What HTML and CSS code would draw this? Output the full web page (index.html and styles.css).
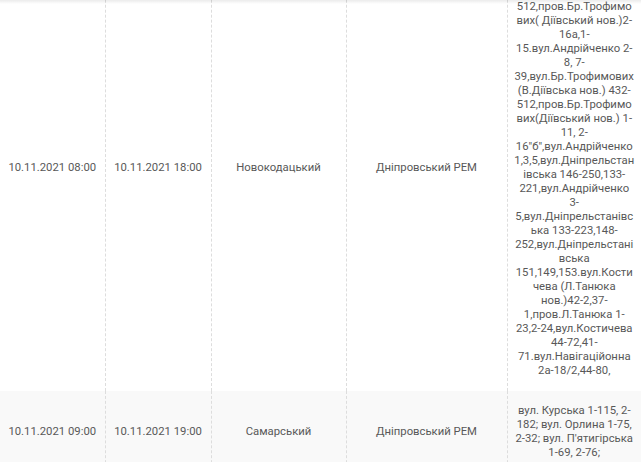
FILE: index.html
```html
<!DOCTYPE html>
<html lang="uk">
<head>
  <meta charset="UTF-8" />
  <meta name="viewport" content="width=device-width, initial-scale=1.0"/>
  <title>Графік відключень</title>
  <link rel="stylesheet" href="styles.css">
</head>
<body>

<div class="viewport">
  <table class="schedule">
    <colgroup>
      <col class="c-start">
      <col class="c-end">
      <col class="c-area">
      <col class="c-rem">
      <col class="c-addr">
    </colgroup>
    <tbody>
      <tr>
        <td>10.11.2021 08:00</td>
        <td>10.11.2021 18:00</td>
        <td>Новокодацький</td>
        <td>Дніпровський РЕМ</td>
        <td>вул.Андрійченко 1-7,вул.Бр.Трофимових (В.Діївська нов.) 432-512,пров.Бр.Трофимових( Діївський нов.)2-16а,1-15.вул.Андрійченко 2-8, 7-39,вул.Бр.Трофимових (В.Діївська нов.) 432-512,пров.Бр.Трофимових(Діївський нов.) 1-11, 2-16"б",вул.Андрійченко 1,3,5,вул.Дніпрельстанівська 146-250,133-221,вул.Андрійченко 3-5,вул.Дніпрельстанівська 133-223,148-252,вул.Дніпрельстанівська 151,149,153.вул.Костичева (Л.Танюка нов.)42-2,37-1,пров.Л.Танюка 1-23,2-24,вул.Костичева 44-72,41-71.вул.Навігаційонна 2а-18/2,44-80,</td>
      </tr>
      <tr class="alt">
        <td>10.11.2021 09:00</td>
        <td>10.11.2021 19:00</td>
        <td>Самарський</td>
        <td>Дніпровський РЕМ</td>
        <td>вул. Курська 1-115, 2-182; вул. Орлина 1-75, 2-32; вул. П'ятигірська 1-69, 2-76;</td>
      </tr>
    </tbody>
  </table>
</div>

</body>
</html>
```

FILE: styles.css
```css
* { box-sizing: border-box; margin: 0; padding: 0; }

body {
  font-family: Roboto, 'Liberation Sans', sans-serif;
  font-size: 11.3px;
  color: #585858;
  background: #fff;
}

.viewport {
  position: relative;
  height: 462px;
  overflow: hidden;
}

.viewport::before {
  content: '';
  position: absolute;
  top: 0;
  left: 0;
  right: 0;
  height: 4px;
  background: linear-gradient(to bottom, rgba(0, 0, 0, 0.08), rgba(0, 0, 0, 0));
  z-index: 1;
}

.schedule {
  width: 641px;
  border-collapse: collapse;
  table-layout: fixed;
  margin-top: -55px;
}

.c-start { width: 105px; }
.c-end { width: 106px; }
.c-area { width: 135px; }
.c-rem { width: 161px; }
.c-addr { width: 134px; }

.schedule td {
  padding: 13px 6.5px;
  line-height: 14px;
  text-align: center;
  vertical-align: middle;
  overflow-wrap: break-word;
  border-left: 1px dashed #ddd;
}

.schedule td:first-child {
  border-left: none;
}

.schedule tr.alt td {
  background: #f9f9f9;
}
```
